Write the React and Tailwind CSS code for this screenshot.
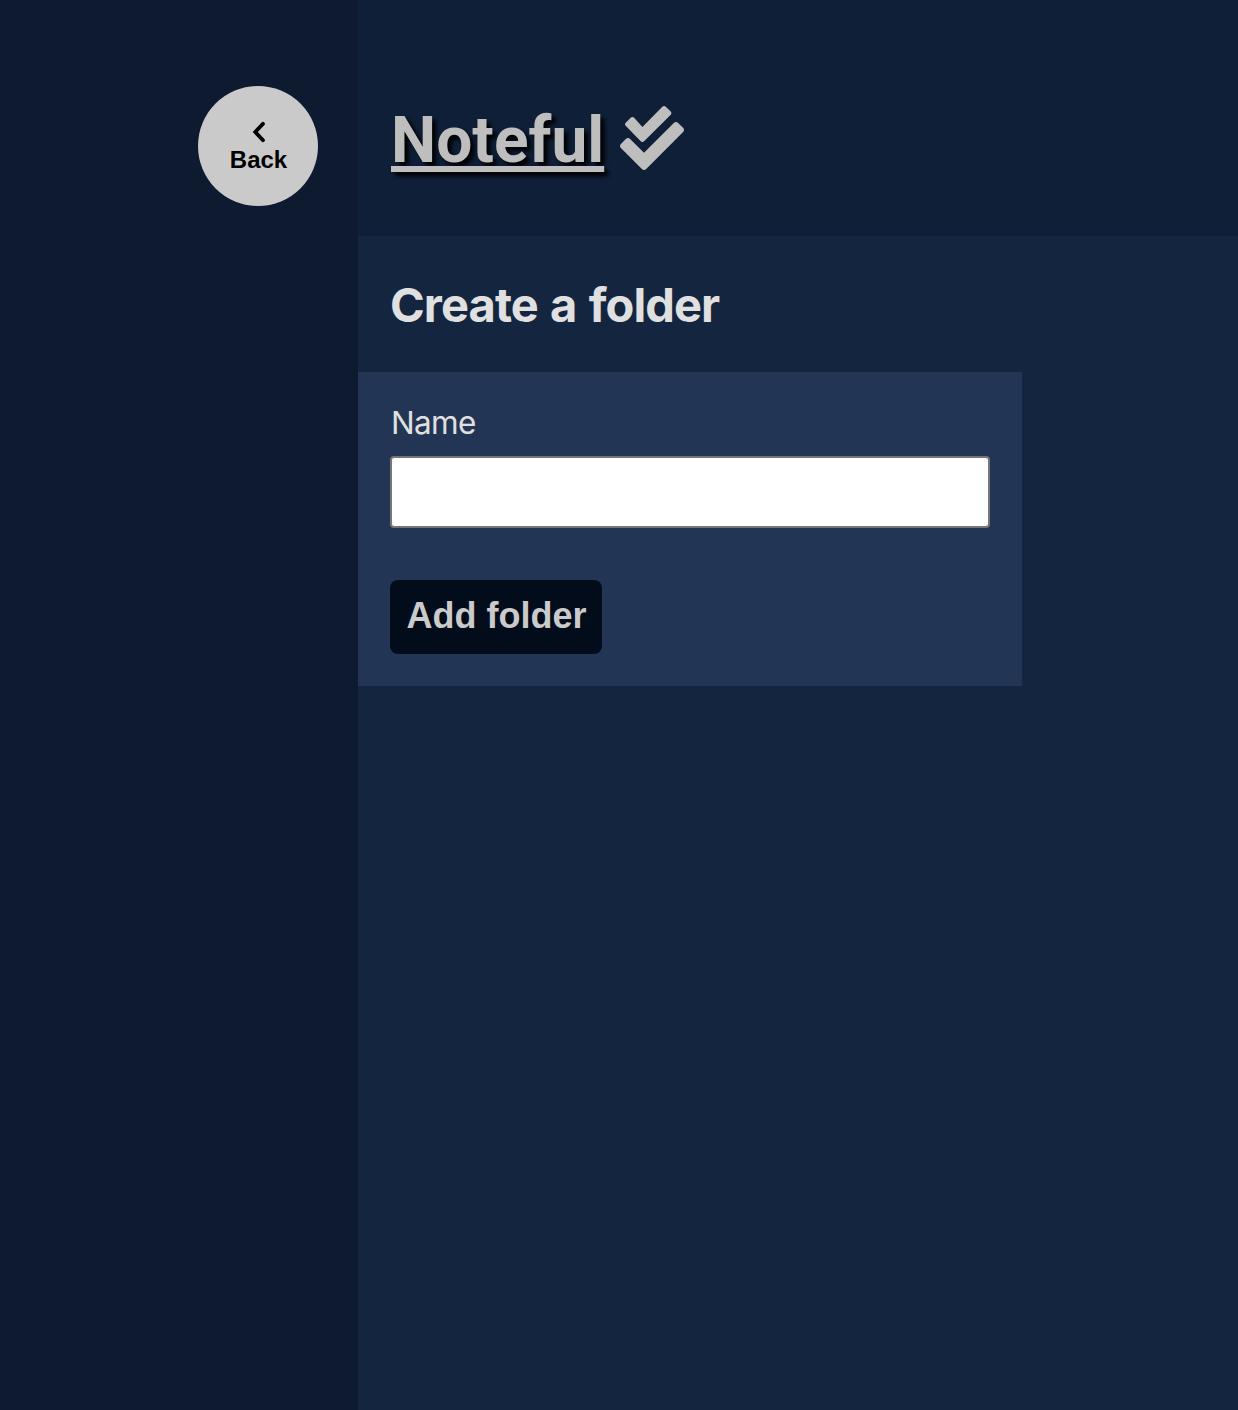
function CheckDouble({ className }) {
  return (
    <svg viewBox="0 0 64 64" className={className} fill="currentColor" aria-hidden="true">
      <path d="M63.1 21.8 58.1 16.9c-1.2-1.2-3.1-1.2-4.3 0L24 46.8 10.1 32.9c-1.2-1.2-3.1-1.2-4.3 0L.9 37.9c-1.2 1.2-1.2 3.1 0 4.2l21 21c1.2 1.2 3.1 1.2 4.3 0l36.9-37.1c1.2-1.2 1.2-3 0-4.2Z" />
      <path d="M20.5 35c1.2 1.2 2.6 1.2 3.8 0l26.2-26c1.2-1.2 1.2-2.5 0-3.7L46 .9c-1.2-1.2-2.7-1.2-3.9 0L22.4 20.9l-8-8.9c-1.2-1.2-2.8-1.2-4 0l-4.5 4.4c-1.2 1.2-1.2 2.5 0 3.7Z" />
    </svg>
  );
}

function ChevronLeft({ className }) {
  return (
    <svg viewBox="0 0 24 24" className={className} fill="none" stroke="currentColor" strokeWidth="3.8" strokeLinecap="round" aria-hidden="true">
      <path d="m16 3.8-7.7 8.2 7.7 8.2" />
    </svg>
  );
}

export default function App() {
  return (
    <div className="flex h-[1410px] w-full overflow-hidden bg-[#14253f] font-['Inter',sans-serif]">
      <nav className="flex w-[358px] shrink-0 justify-end bg-[#0e1a30] pt-[86px] pr-10">
        <button className="flex size-[120px] flex-col items-center rounded-full bg-[#cacaca] pt-[34px] pl-px font-['Liberation_Sans',Arial,sans-serif] text-[24px] font-bold text-black">
          <ChevronLeft className="size-6" />
          <span className="mt-0.5 leading-[28px]">Back</span>
        </button>
      </nav>
      <div className="flex flex-1 flex-col">
        <header className="flex h-[236px] items-start bg-[#0f1f37] pt-[102px] pl-[33px] text-[#bebebe]">
          <h1 className="flex items-start font-['Roboto',sans-serif] text-[64px] leading-[77px] font-bold">
            <a className="underline [text-shadow:4px_4px_4px_black]">Noteful</a>
            <CheckDouble className="mt-1 ml-4 size-16" />
          </h1>
        </header>
        <main>
          <h2 className="h-[136px] pt-[41px] pl-8 text-[47px] leading-[56px] font-bold tracking-[-0.9px] [word-spacing:2px] text-[#e0e0e0]">Create a folder</h2>
          <form className="h-[314px] w-[664px] bg-[#233554] px-8 pt-8">
            <label className="block h-[52px] pl-px text-[31.5px] leading-[38px] tracking-[-0.7px] text-[#e0e0e0]">Name</label>
            <input className="block h-[72px] w-[600px] rounded-[4px] border-2 border-[#767676] bg-white" />
            <button type="button" className="mt-[52px] h-[74px] w-[212px] rounded-lg bg-[#020c1b] pb-[2px] pl-px font-['Liberation_Sans',Arial,sans-serif] text-[36px] font-bold text-[#cacaca]">Add folder</button>
          </form>
        </main>
      </div>
    </div>
  );
}
